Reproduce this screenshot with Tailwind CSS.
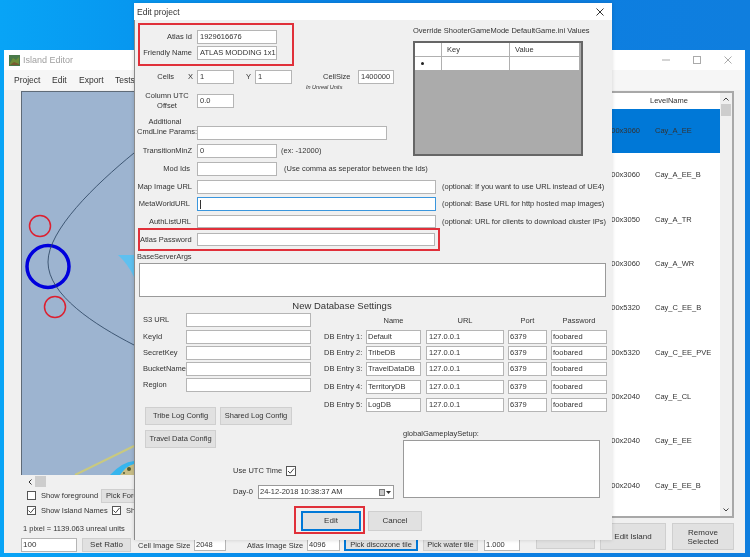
<!DOCTYPE html>
<html lang="en">
<head>
    <meta charset="UTF-8" />
    <title>Edit project</title>
    <script src="https://cdn.jsdelivr.net/npm/@tailwindcss/browser@4"></script>
</head>
<body class="w-[750px] h-[557px] overflow-hidden">
<div class="relative w-[750px] h-[557px] overflow-hidden blur-[0.4px] bg-linear-to-r from-[#08a4f6] via-[#0a7fe4] to-[#0f7ede] font-['Liberation_Sans',sans-serif] text-[7.5px] leading-[10px] text-[#333]">

    <!-- Island Editor window -->
    <div class="absolute left-[4px] top-[50px] w-[741px] h-[503px] bg-[#f0f0f0] flex flex-col">
        <div class="h-[20px] bg-white flex items-center pl-[5px] shrink-0">
            <svg width="11" height="11" viewBox="0 0 11 11">
                <rect width="11" height="11" fill="#4a7a4a" />
                <path d="M1 8 L4 3 L7 5 L10 2 V10 H1 Z" fill="#6f8f3a" />
                <path d="M1 10 L5 7 L10 9 V10 Z" fill="#7a5a30" />
            </svg>
            <span class="ml-[3px] text-[9px] text-[#a0a0a0]">Island Editor</span>
            <div class="ml-auto flex items-center gap-[23px] pr-[13px]">
                <svg width="8" height="8" viewBox="0 0 8 8"><path d="M0 4 H8" stroke="#aaa" /></svg>
                <svg width="8" height="8" viewBox="0 0 8 8"><rect x="0.5" y="0.5" width="7" height="7" fill="none" stroke="#aaa" /></svg>
                <svg width="8" height="8" viewBox="0 0 8 8"><path d="M0.5 0.5 L7.5 7.5 M7.5 0.5 L0.5 7.5" stroke="#aaa" /></svg>
            </div>
        </div>
        <div class="h-[20px] bg-[#f6f6f6] flex items-center pl-[10px] text-[8.5px] shrink-0">
            <span class="w-[38px]">Project</span>
            <span class="w-[27px]">Edit</span>
            <span class="w-[36px]">Export</span>
            <span>Tests</span>
        </div>
        <div class="flex flex-1 min-h-0">
            <!-- map column -->
            <div class="w-[596px] pl-[17px] pt-[1px] shrink-0">
                <div class="w-[579px] h-[384px] border-l border-t border-[#5f6b78] bg-[#9db4d0] overflow-hidden">
                    <svg class="block -ml-px -mt-px" width="579" height="384" viewBox="21 91 579 384">
                        <circle cx="40" cy="226" r="10.5" fill="none" stroke="#dd1f2f" stroke-width="1.5" />
                        <circle cx="48" cy="266.5" r="21" fill="none" stroke="#0000dd" stroke-width="3.5" />
                        <circle cx="55" cy="307" r="10.5" fill="none" stroke="#dd1f2f" stroke-width="1.5" />
                        <path d="M134 153 C95 185 48 230 48 262 C48 295 95 325 134 345" fill="none" stroke="#263f5c" stroke-width="0.8" />
                        <path d="M118 255 L134 255 V277 Q128 264 118 255 Z" fill="#5ec0f0" />
                        <path d="M134 446 L75 475" stroke="#c9c97f" stroke-width="2" />
                        <path d="M110 475 Q122 462 134 461 V475 Z" fill="#36b5ee" />
                        <path d="M120 475 Q126 466 134 464 V475 Z" fill="#c8bd86" />
                        <circle cx="129" cy="469" r="2" fill="#4f5a30" />
                        <circle cx="124" cy="473" r="1" fill="#4f5a30" />
                    </svg>
                </div>
                <div class="h-[13px] flex items-center pl-[7px]">
                    <svg width="4" height="6" viewBox="0 0 4 6"><path d="M3.5 0.5 L1 3 L3.5 5.5" fill="none" stroke="#333" stroke-width="1" /></svg>
                    <div class="ml-[3px] w-[11px] h-[11px] bg-[#cdcdcd]"></div>
                </div>
                <div class="flex items-center h-[15px] pl-[6px]">
                    <div class="w-[9px] h-[9px] border border-[#555] bg-white shrink-0"></div>
                    <span class="ml-[5px] w-[55px] whitespace-nowrap">Show foreground</span>
                    <div class="ml-[5px] w-[60px] h-[14px] bg-[#e1e1e1] border border-[#cfcfcf] flex items-center pl-[4px] whitespace-nowrap">Pick Foreground</div>
                </div>
                <div class="flex items-center h-[15px] pl-[6px]">
                    <div class="w-[9px] h-[9px] border border-[#555] bg-white flex items-center justify-center shrink-0">
                        <svg width="7" height="7" viewBox="0 0 7 7"><path d="M0.5 3.5 L2.7 5.7 L6.5 1" fill="none" stroke="#444" /></svg>
                    </div>
                    <span class="ml-[5px] w-[72px] whitespace-nowrap">Show Island Names</span>
                    <div class="ml-[-1px] w-[9px] h-[9px] border border-[#555] bg-white flex items-center justify-center shrink-0">
                        <svg width="7" height="7" viewBox="0 0 7 7"><path d="M0.5 3.5 L2.7 5.7 L6.5 1" fill="none" stroke="#444" /></svg>
                    </div>
                    <span class="ml-[5px]">Show</span>
                </div>
                <div class="h-[10px] mt-[6px] pl-[2px] whitespace-nowrap">1 pixel = 1139.063 unreal units</div>
                <div class="flex items-start mt-[4px]">
                    <div class="w-[56px] h-[14px] bg-white border border-[#b5b5b5] pl-[1px] text-[8px] leading-[12px]">100</div>
                    <div class="ml-[5px] w-[49px] h-[14px] bg-[#e1e1e1] border border-[#cfcfcf] text-center leading-[12px] text-[8px]">Set Ratio</div>
                    <span class="ml-[7px] w-[49px] mt-[3px] whitespace-nowrap">Cell Image Size</span>
                    <div class="ml-[7px] w-[32px] h-[13px] bg-white border border-[#b5b5b5] pl-[1px] leading-[11px]">2048</div>
                    <span class="ml-[21px] w-[53px] mt-[3px] whitespace-nowrap">Atlas Image Size</span>
                    <div class="ml-[7px] w-[33px] h-[13px] bg-white border border-[#b5b5b5] pl-[1px] leading-[11px]">4096</div>
                    <div class="ml-[4px] w-[74px] h-[13px] bg-[#e1e1e1] border-2 border-[#0078d7] text-center leading-[9px] whitespace-nowrap">Pick discozone tile</div>
                    <div class="ml-[5px] w-[55px] h-[13px] bg-[#e1e1e1] border border-[#cfcfcf] text-center leading-[11px] whitespace-nowrap">Pick water tile</div>
                    <div class="ml-[6px] w-[36px] h-[13px] bg-white border border-[#b5b5b5] pl-[1px] leading-[11px]">1.000</div>
                    <div class="ml-[16px] w-[59px] h-[11px] bg-[#e1e1e1] border border-[#cfcfcf]"></div>
                </div>
            </div>
            <!-- level list column -->
            <div class="w-[134px] pt-[1px] shrink-0">
                <div class="h-[427px] border-2 border-[#a8a8a8] bg-white flex">
                    <div class="w-[118px] overflow-hidden whitespace-nowrap">
                        <div class="h-[16px] pl-[48px] flex items-center bg-white text-[7.5px]">LevelName</div>
                        <div class="h-[44.3px] flex items-center bg-[#0078d7]"><span class="w-[38px] text-right shrink-0">1000x3060</span><span class="ml-[15px]">Cay_A_EE</span></div>
                        <div class="h-[44.3px] flex items-center"><span class="w-[38px] text-right shrink-0">1000x3060</span><span class="ml-[15px]">Cay_A_EE_B</span></div>
                        <div class="h-[44.3px] flex items-center"><span class="w-[38px] text-right shrink-0">1000x3050</span><span class="ml-[15px]">Cay_A_TR</span></div>
                        <div class="h-[44.3px] flex items-center"><span class="w-[38px] text-right shrink-0">1000x3060</span><span class="ml-[15px]">Cay_A_WR</span></div>
                        <div class="h-[44.3px] flex items-center"><span class="w-[38px] text-right shrink-0">1000x5320</span><span class="ml-[15px]">Cay_C_EE_B</span></div>
                        <div class="h-[44.3px] flex items-center"><span class="w-[38px] text-right shrink-0">1000x5320</span><span class="ml-[15px]">Cay_C_EE_PVE</span></div>
                        <div class="h-[44.3px] flex items-center"><span class="w-[38px] text-right shrink-0">1000x2040</span><span class="ml-[15px]">Cay_E_CL</span></div>
                        <div class="h-[44.3px] flex items-center"><span class="w-[38px] text-right shrink-0">1000x2040</span><span class="ml-[15px]">Cay_E_EE</span></div>
                        <div class="h-[44.3px] flex items-center"><span class="w-[38px] text-right shrink-0">1000x2040</span><span class="ml-[15px]">Cay_E_EE_B</span></div>
                    </div>
                    <div class="w-[12px] bg-[#f0f0f0] flex flex-col items-center pt-[4px]">
                        <svg width="6" height="4" viewBox="0 0 6 4"><path d="M0.5 3.5 L3 1 L5.5 3.5" fill="none" stroke="#444" /></svg>
                        <div class="mt-[3px] w-[10px] h-[12px] bg-[#cdcdcd]"></div>
                        <svg class="mt-auto mb-[4px]" width="6" height="4" viewBox="0 0 6 4"><path d="M0.5 0.5 L3 3 L5.5 0.5" fill="none" stroke="#444" /></svg>
                    </div>
                </div>
                <div class="flex mt-[5px]">
                    <div class="w-[66px] h-[27px] bg-[#e1e1e1] border border-[#cfcfcf] flex items-center justify-center text-[8px]">Edit Island</div>
                    <div class="ml-[6px] w-[62px] h-[27px] bg-[#e1e1e1] border border-[#cfcfcf] flex items-center justify-center text-center text-[8px] leading-[9px]">Remove<br />Selected</div>
                </div>
            </div>
        </div>
    </div>

    <!-- Edit project dialog -->
    <div class="absolute left-[134px] top-[3px] w-[478px] h-[537px] bg-[#f0f0f0] border-l border-[#8a8a8a] box-border shadow-[0_0_4px_rgba(0,0,0,0.15)]">
        <div class="h-[17px] bg-white flex items-center pl-[3px] text-[8.5px] -ml-px">
            <span>Edit project</span>
            <svg class="ml-auto mr-[8px]" width="8" height="8" viewBox="0 0 8 8"><path d="M0.5 0.5 L7.5 7.5 M7.5 0.5 L0.5 7.5" stroke="#333" /></svg>
        </div>
        <div class="-ml-px">
            <!-- top section: identity fields + override grid -->
            <div class="flex">
                <div class="w-[279px] shrink-0">
                    <div class="ml-[4px] mt-[3px] w-[156px] h-[43px] border-2 border-[#e0303a] pt-[5px]">
                        <div class="flex items-center h-[14px]">
                            <span class="w-[52px] text-right mr-[5px]">Atlas Id</span>
                            <div class="w-[80px] h-[14px] bg-white border border-[#b5b5b5] pl-[2px] leading-[12px]">1929616676</div>
                        </div>
                        <div class="flex items-center h-[14px] mt-[2px]">
                            <span class="w-[52px] text-right mr-[5px] whitespace-nowrap">Friendly Name</span>
                            <div class="w-[80px] h-[14px] bg-white border border-[#b5b5b5] pl-[2px] leading-[12px] whitespace-nowrap">ATLAS MODDING 1x1</div>
                        </div>
                    </div>
                    <div class="flex items-center h-[14px] mt-[4px]">
                        <span class="w-[40px] text-right">Cells</span>
                        <span class="w-[19px] text-right">X</span>
                        <div class="ml-[4px] w-[37px] h-[14px] bg-white border border-[#b5b5b5] pl-[2px] leading-[12px]">1</div>
                        <span class="ml-[12px] w-[5px]">Y</span>
                        <div class="ml-[4px] w-[37px] h-[14px] bg-white border border-[#b5b5b5] pl-[2px] leading-[12px]">1</div>
                        <span class="ml-[31px] w-[27px] whitespace-nowrap">CellSize</span>
                        <div class="ml-[8px] w-[36px] h-[14px] bg-white border border-[#b5b5b5] pl-[2px] leading-[12px]">1400000</div>
                    </div>
                    <div class="h-[7px] pl-[172px] text-[5.5px] leading-[7px] italic whitespace-nowrap">In Unreal Units</div>
                    <div class="flex items-center h-[20px]">
                        <span class="w-[66px] -mr-[3px] text-center">Column UTC<br />Offset</span>
                        <div class="w-[37px] h-[14px] bg-white border border-[#b5b5b5] pl-[2px] leading-[12px]">0.0</div>
                    </div>
                    <div class="flex items-end h-[24px] mt-[5px]">
                        <span class="ml-[3px] w-[60px] pr-[4px] mb-[3px] text-center whitespace-nowrap">Additional<br />CmdLine Params:</span>
                        <div class="w-[190px] h-[14px] bg-white border border-[#b5b5b5]"></div>
                    </div>
                    <div class="flex items-center h-[14px] mt-[4px]">
                        <span class="w-[58px] text-right mr-[5px] whitespace-nowrap">TransitionMinZ</span>
                        <div class="w-[80px] h-[14px] bg-white border border-[#b5b5b5] pl-[2px] leading-[12px]">0</div>
                        <span class="ml-[4px] whitespace-nowrap">(ex: -12000)</span>
                    </div>
                </div>
                <div class="w-[170px] shrink-0">
                    <div class="mt-[6px] h-[10px] whitespace-nowrap">Override ShooterGameMode DefaultGame.ini Values</div>
                    <div class="mt-[5px] h-[115px] w-[170px] bg-[#ababab] border-2 border-[#666]">
                        <div class="flex bg-white w-[164px] h-[13px] leading-[13px]">
                            <div class="w-[27px] border-r border-[#b0b0b0]"></div>
                            <div class="w-[68px] border-r border-[#b0b0b0] pl-[5px]">Key</div>
                            <div class="flex-1 pl-[5px]">Value</div>
                        </div>
                        <div class="flex bg-white w-[164px] h-[14px] border-t border-[#b0b0b0]">
                            <div class="w-[27px] border-r border-[#b0b0b0] flex items-center pl-[6px]"><div class="w-[3px] h-[3px] rounded-full bg-[#222]"></div></div>
                            <div class="w-[68px] border-r border-[#b0b0b0]"></div>
                        </div>
                    </div>
                </div>
            </div>

            <!-- url rows -->
            <div class="flex items-center h-[14px] mt-[4px]">
                <span class="w-[56px] text-right mr-[7px]">Mod Ids</span>
                <div class="w-[80px] h-[14px] bg-white border border-[#b5b5b5]"></div>
                <span class="ml-[7px] whitespace-nowrap">(Use comma as seperator between the Ids)</span>
            </div>
            <div class="flex items-center h-[14px] mt-[4px]">
                <span class="w-[58px] text-right mr-[5px] whitespace-nowrap">Map Image URL</span>
                <div class="w-[239px] h-[14px] bg-white border border-[#b5b5b5]"></div>
                <span class="ml-[6px] whitespace-nowrap">(optional: If you want to use URL instead of UE4)</span>
            </div>
            <div class="flex items-center h-[14px] mt-[3px]">
                <span class="w-[56px] text-right mr-[7px] whitespace-nowrap">MetaWorldURL</span>
                <div class="w-[239px] h-[14px] bg-white border border-[#3a96dd] pl-[2px] flex items-center"><div class="w-px h-[9px] bg-[#333]"></div></div>
                <span class="ml-[6px] whitespace-nowrap">(optional: Base URL for http hosted map images)</span>
            </div>
            <div class="flex items-center h-[13px] mt-[4px]">
                <span class="w-[57px] text-right mr-[6px] whitespace-nowrap">AuthListURL</span>
                <div class="w-[239px] h-[13px] bg-white border border-[#b5b5b5]"></div>
                <span class="ml-[6px] whitespace-nowrap">(optional: URL for clients to download cluster IPs)</span>
            </div>
            <div class="ml-[4px] w-[302px] h-[23px] border-2 border-[#e0303a] pt-[3px]">
                <div class="flex items-center h-[13px]">
                    <span class="w-[50px] text-right mr-[7px] whitespace-nowrap">Atlas Password</span>
                    <div class="w-[238px] h-[13px] bg-white border border-[#b5b5b5]"></div>
                </div>
            </div>
            <div class="ml-[3px] mt-[1px] h-[10px]">BaseServerArgs</div>
            <div class="ml-[5px] mt-px w-[467px] h-[34px] bg-white border border-[#9a9a9a]"></div>

            <div class="w-[416px] mt-[3px] h-[12px] text-center text-[9.5px] leading-[12px]">New Database Settings</div>

            <!-- database settings -->
            <div class="flex mt-px h-[98px]">
                <div class="w-[190px] shrink-0 pl-[9px]">
                    <div class="flex items-center h-[14px]"><span class="w-[43px] whitespace-nowrap">S3 URL</span><div class="w-[125px] h-[14px] bg-white border border-[#b5b5b5]"></div></div>
                    <div class="flex items-center h-[14px] mt-[3px]"><span class="w-[43px] whitespace-nowrap">KeyId</span><div class="w-[125px] h-[14px] bg-white border border-[#b5b5b5]"></div></div>
                    <div class="flex items-center h-[14px] mt-[2px]"><span class="w-[43px] whitespace-nowrap">SecretKey</span><div class="w-[125px] h-[14px] bg-white border border-[#b5b5b5]"></div></div>
                    <div class="flex items-center h-[14px] mt-[2px]"><span class="w-[43px] whitespace-nowrap">BucketName</span><div class="w-[125px] h-[14px] bg-white border border-[#b5b5b5]"></div></div>
                    <div class="flex items-center h-[14px] mt-[2px]"><span class="w-[43px] whitespace-nowrap">Region</span><div class="w-[125px] h-[14px] bg-white border border-[#b5b5b5]"></div></div>
                </div>
                <div class="flex-1">
                    <div class="flex h-[10px] mt-[3px] text-center">
                        <span class="w-[42px]"></span><span class="w-[55px]">Name</span><span class="ml-[5px] w-[78px]">URL</span><span class="ml-[4px] w-[39px]">Port</span><span class="ml-[4px] w-[56px]">Password</span>
                    </div>
                    <div class="flex items-center h-[14px] mt-[4px]">
                        <span class="w-[37px] whitespace-nowrap mr-[5px]">DB Entry 1:</span>
                        <div class="w-[55px] h-[14px] bg-white border border-[#b5b5b5] pl-[1px] leading-[12px]">Default</div>
                        <div class="ml-[5px] w-[78px] h-[14px] bg-white border border-[#b5b5b5] pl-[2px] leading-[12px]">127.0.0.1</div>
                        <div class="ml-[4px] w-[39px] h-[14px] bg-white border border-[#b5b5b5] pl-[1px] leading-[12px]">6379</div>
                        <div class="ml-[4px] w-[56px] h-[14px] bg-white border border-[#b5b5b5] pl-[1px] leading-[12px]">foobared</div>
                    </div>
                    <div class="flex items-center h-[14px] mt-[2px]">
                        <span class="w-[37px] whitespace-nowrap mr-[5px]">DB Entry 2:</span>
                        <div class="w-[55px] h-[14px] bg-white border border-[#b5b5b5] pl-[1px] leading-[12px]">TribeDB</div>
                        <div class="ml-[5px] w-[78px] h-[14px] bg-white border border-[#b5b5b5] pl-[2px] leading-[12px]">127.0.0.1</div>
                        <div class="ml-[4px] w-[39px] h-[14px] bg-white border border-[#b5b5b5] pl-[1px] leading-[12px]">6379</div>
                        <div class="ml-[4px] w-[56px] h-[14px] bg-white border border-[#b5b5b5] pl-[1px] leading-[12px]">foobared</div>
                    </div>
                    <div class="flex items-center h-[14px] mt-[2px]">
                        <span class="w-[37px] whitespace-nowrap mr-[5px]">DB Entry 3:</span>
                        <div class="w-[55px] h-[14px] bg-white border border-[#b5b5b5] pl-[1px] leading-[12px] whitespace-nowrap">TravelDataDB</div>
                        <div class="ml-[5px] w-[78px] h-[14px] bg-white border border-[#b5b5b5] pl-[2px] leading-[12px]">127.0.0.1</div>
                        <div class="ml-[4px] w-[39px] h-[14px] bg-white border border-[#b5b5b5] pl-[1px] leading-[12px]">6379</div>
                        <div class="ml-[4px] w-[56px] h-[14px] bg-white border border-[#b5b5b5] pl-[1px] leading-[12px]">foobared</div>
                    </div>
                    <div class="flex items-center h-[14px] mt-[4px]">
                        <span class="w-[37px] whitespace-nowrap mr-[5px]">DB Entry 4:</span>
                        <div class="w-[55px] h-[14px] bg-white border border-[#b5b5b5] pl-[1px] leading-[12px]">TerritoryDB</div>
                        <div class="ml-[5px] w-[78px] h-[14px] bg-white border border-[#b5b5b5] pl-[2px] leading-[12px]">127.0.0.1</div>
                        <div class="ml-[4px] w-[39px] h-[14px] bg-white border border-[#b5b5b5] pl-[1px] leading-[12px]">6379</div>
                        <div class="ml-[4px] w-[56px] h-[14px] bg-white border border-[#b5b5b5] pl-[1px] leading-[12px]">foobared</div>
                    </div>
                    <div class="flex items-center h-[14px] mt-[4px]">
                        <span class="w-[37px] whitespace-nowrap mr-[5px]">DB Entry 5:</span>
                        <div class="w-[55px] h-[14px] bg-white border border-[#b5b5b5] pl-[1px] leading-[12px]">LogDB</div>
                        <div class="ml-[5px] w-[78px] h-[14px] bg-white border border-[#b5b5b5] pl-[2px] leading-[12px]">127.0.0.1</div>
                        <div class="ml-[4px] w-[39px] h-[14px] bg-white border border-[#b5b5b5] pl-[1px] leading-[12px]">6379</div>
                        <div class="ml-[4px] w-[56px] h-[14px] bg-white border border-[#b5b5b5] pl-[1px] leading-[12px]">foobared</div>
                    </div>
                </div>
            </div>

            <!-- log configs, day-0, gameplay setup -->
            <div class="flex -mt-[4px]">
                <div class="w-[269px] shrink-0">
                    <div class="flex ml-[11px]">
                        <div class="w-[71px] h-[18px] bg-[#e1e1e1] border border-[#cfcfcf] flex items-center justify-center">Tribe Log Config</div>
                        <div class="ml-[4px] w-[72px] h-[18px] bg-[#e1e1e1] border border-[#cfcfcf] flex items-center justify-center">Shared Log Config</div>
                    </div>
                    <div class="ml-[11px] mt-[5px] w-[71px] h-[18px] bg-[#e1e1e1] border border-[#cfcfcf] flex items-center justify-center">Travel Data Config</div>
                    <div class="flex items-center h-[10px] mt-[18px] ml-[99px]">
                        <span class="w-[53px] whitespace-nowrap">Use UTC Time</span>
                        <div class="w-[10px] h-[10px] border border-[#555] bg-white flex items-center justify-center">
                            <svg width="8" height="8" viewBox="0 0 8 8"><path d="M1 4 L3.2 6.2 L7 1.5" fill="none" stroke="#444" /></svg>
                        </div>
                    </div>
                    <div class="flex items-center h-[14px] mt-[9px] ml-[99px]">
                        <span class="w-[25px]">Day-0</span>
                        <div class="w-[136px] h-[14px] bg-white border border-[#9a9a9a] pl-[1px] flex items-center whitespace-nowrap">
                            <span>24-12-2018 10:38:37 AM</span>
                            <div class="ml-auto w-[6px] h-[7px] bg-[#c8c8c8] border border-[#777]"></div>
                            <svg class="ml-[1px] mr-[2px]" width="5" height="3" viewBox="0 0 5 3"><path d="M0 0 H5 L2.5 3 Z" fill="#333" /></svg>
                        </div>
                    </div>
                </div>
                <div class="mt-[22px]">
                    <div class="h-[10px] whitespace-nowrap">globalGameplaySetup:</div>
                    <div class="mt-px w-[197px] h-[58px] bg-white border border-[#9a9a9a]"></div>
                </div>
            </div>

            <!-- dialog buttons -->
            <div class="flex items-center ml-[160px] mt-[7px]">
                <div class="w-[71px] h-[28px] border-2 border-[#e0303a] pl-[5px] pt-[3px]">
                    <div class="w-[60px] h-[20px] bg-[#e1e1e1] border-2 border-[#0078d7] flex items-center justify-center text-[8px]">Edit</div>
                </div>
                <div class="ml-[3px] mt-px w-[54px] h-[20px] bg-[#e1e1e1] border border-[#cfcfcf] flex items-center justify-center text-[8px]">Cancel</div>
            </div>
        </div>
    </div>
</div>
</body>
</html>
